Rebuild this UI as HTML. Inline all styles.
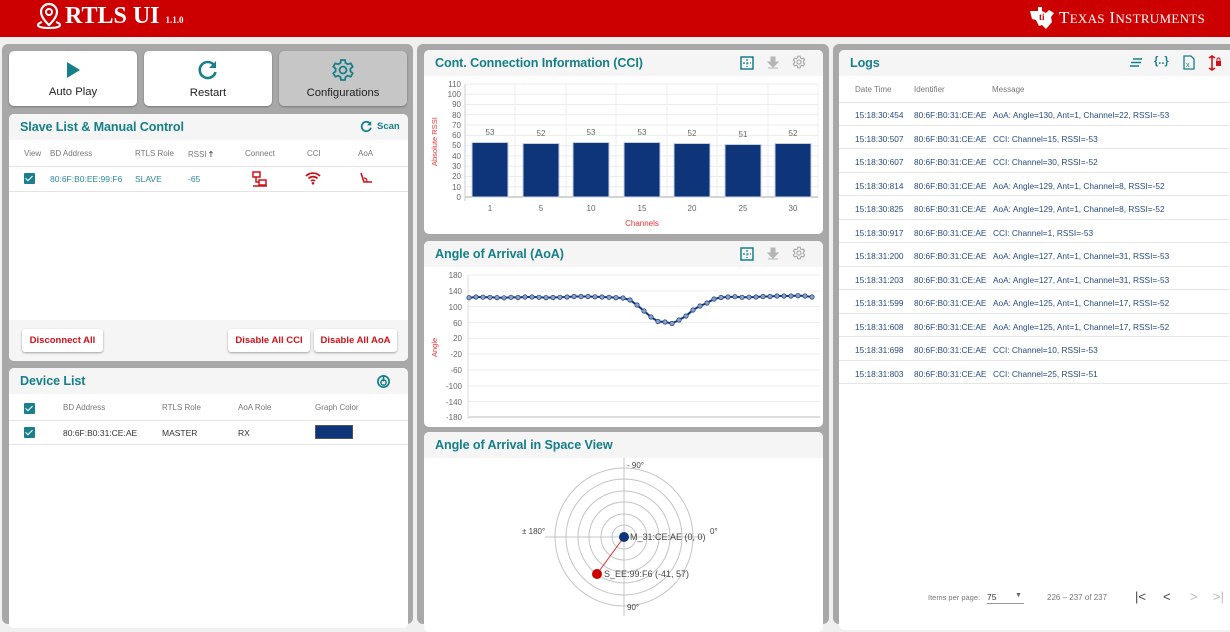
<!DOCTYPE html>
<html><head><meta charset="utf-8"><style>
*{box-sizing:border-box;margin:0;padding:0}
body{width:1230px;height:616px;overflow:hidden;background:#f0f0f0;font-family:"Liberation Sans",sans-serif;position:relative;font-size:9px;color:#333}
.abs{position:absolute}
.hdr{left:0;top:0;width:1230px;height:37px;background:#cc0000}
.col{background:#a8a8a8;border-radius:6px}
.card{background:#fff;border-radius:5px;overflow:hidden}
.ch{background:#f5f5f5;height:26px;position:relative}
.ct{position:absolute;left:11px;top:6px;font-size:12.6px;color:#167f8a;font-weight:bold;letter-spacing:-0.1px}
.btn{background:#fff;border-radius:5px;box-shadow:0 1px 2px rgba(0,0,0,.3);text-align:center;font-size:11.3px;color:#222}
.rb{background:#fff;border-radius:3px;box-shadow:0 1px 2px rgba(0,0,0,.35);color:#d0101a;font-weight:bold;font-size:9.5px;text-align:center;line-height:23px;height:23px}
.th{color:#777;font-size:8px}
.cb{width:11px;height:11px;background:#1a7f8c;border-radius:1px}
.cb:after{content:"";position:absolute;left:3px;top:1px;width:3px;height:6px;border:solid #fff;border-width:0 1.5px 1.5px 0;transform:rotate(45deg)}
.ln{height:1px;background:#e4e4e4}
</style></head><body>
<div class="abs hdr"></div>
<svg class="abs" style="left:36px;top:2px" width="26" height="28" viewBox="0 0 26 28"><path d="M13 2a8 8 0 0 0-8 8c0 6 8 13 8 13s8-7 8-13a8 8 0 0 0-8-8z" fill="none" stroke="#fff" stroke-width="2.2"/><circle cx="13" cy="10" r="3" fill="none" stroke="#fff" stroke-width="2"/><path d="M6 20c-3 1-4 2-4 3 0 2 5 3 11 3s11-1 11-3c0-1-1-2-4-3" fill="none" stroke="#fff" stroke-width="2"/></svg>
<div class="abs" style="left:65px;top:3px;color:#fff;font-family:'Liberation Serif',serif;font-weight:bold;font-size:24px">RTLS UI <span style="font-size:9px">1.1.0</span></div>
<svg class="abs" style="left:1028px;top:5px" width="28" height="24" viewBox="0 0 28 24"><path d="M2 6h8V2h4v4l4 2 3-3 5 3-3 4 1 5-6 7-4-4-3 1-3-6-4-1z" fill="#fff"/><text x="11" y="15" font-size="9" fill="#cc0000" font-weight="bold" font-family="Liberation Serif">ti</text></svg>
<div class="abs" style="left:1059px;top:8px;color:#fff;font-family:'Liberation Serif',serif;font-size:17px;letter-spacing:0.3px">T<span style="font-size:13px">EXAS</span> I<span style="font-size:13px">NSTRUMENTS</span></div>

<!-- LEFT COLUMN -->
<div class="abs col" style="left:2px;top:44px;width:411px;height:580px"></div>
<div class="abs btn" style="left:9px;top:51px;width:128px;height:55px"><svg style="margin-top:10px" width="16" height="18"><path d="M2 1l13 8-13 8z" fill="#167f8a"/></svg><div style="margin-top:4px">Auto Play</div></div>
<div class="abs btn" style="left:144px;top:51px;width:128px;height:55px"><svg style="margin-top:8px" width="22" height="22" viewBox="0 0 22 22"><path d="M17 6a8 8 0 1 0 1.5 7" fill="none" stroke="#167f8a" stroke-width="2.6"/><path d="M19 2v7h-7z" fill="#167f8a"/></svg><div style="margin-top:3px">Restart</div></div>
<div class="abs btn" style="left:279px;top:51px;width:128px;height:55px;background:#c6c6c6"><svg style="margin-top:7px" width="24" height="24" viewBox="0 0 24 24"><path d="M10 2h4l.6 3 2.2 1.3 2.9-1 2 3.4-2.3 2v2.6l2.3 2-2 3.4-2.9-1-2.2 1.3-.6 3h-4l-.6-3-2.2-1.3-2.9 1-2-3.4 2.3-2v-2.6l-2.3-2 2-3.4 2.9 1L9.4 5z" fill="none" stroke="#167f8a" stroke-width="1.8"/><circle cx="12" cy="12" r="3.5" fill="none" stroke="#167f8a" stroke-width="1.8"/></svg><div style="margin-top:2px">Configurations</div></div>

<div class="abs card" style="left:9px;top:114px;width:399px;height:247px">
 <div class="ch"><div class="ct">Slave List &amp; Manual Control</div>
 <svg class="abs" style="left:351px;top:6px" width="13" height="13" viewBox="0 0 22 22"><path d="M17 6a8 8 0 1 0 1.5 7" fill="none" stroke="#167f8a" stroke-width="3"/><path d="M19 2v7h-7z" fill="#167f8a"/></svg>
 <div class="abs" style="left:368px;top:7px;color:#167f8a;font-size:9.5px;font-weight:bold">Scan</div></div>
 <div class="abs th" style="left:15px;top:35px">View</div><div class="abs th" style="left:41px;top:35px">BD Address</div><div class="abs th" style="left:126px;top:35px">RTLS Role</div><div class="abs th" style="left:179px;top:35px">RSSI <b style="color:#444">🡑</b></div><div class="abs th" style="left:236px;top:35px">Connect</div><div class="abs th" style="left:298px;top:35px">CCI</div><div class="abs th" style="left:349px;top:35px">AoA</div>
 <div class="abs ln" style="left:0;top:52px;width:399px"></div>
 <div class="abs cb" style="left:15px;top:59px"></div>
 <div class="abs" style="left:41px;top:60px;color:#2a8a98;font-size:8.5px">80:6F:B0:EE:99:F6</div>
 <div class="abs" style="left:126px;top:60px;color:#2a8a98;font-size:8.5px">SLAVE</div>
 <div class="abs" style="left:179px;top:60px;color:#2a8a98;font-size:8.5px">-65</div>
 <svg class="abs" style="left:243px;top:57px" width="16" height="16"><rect x="1" y="1" width="7" height="5" fill="none" stroke="#d0101a" stroke-width="1.5"/><rect x="7" y="9" width="7" height="5" fill="none" stroke="#d0101a" stroke-width="1.5"/><path d="M4 6v5h3M1 15h6M7 15h8" stroke="#d0101a" stroke-width="1.5" fill="none"/></svg>
 <svg class="abs" style="left:296px;top:57px" width="16" height="14" viewBox="0 0 16 14"><path d="M1 5a10 10 0 0 1 14 0M3.5 7.5a6.5 6.5 0 0 1 9 0M6 10a3 3 0 0 1 4 0" fill="none" stroke="#d0101a" stroke-width="1.8"/><circle cx="8" cy="12.3" r="1.3" fill="#d0101a"/></svg>
 <svg class="abs" style="left:350px;top:58px" width="14" height="12"><path d="M2 1l3 9h8" fill="none" stroke="#d0101a" stroke-width="1.6"/><path d="M5 6q3 0 3 4" fill="none" stroke="#d0101a" stroke-width="1.2"/></svg>
 <div class="abs ln" style="left:0;top:77px;width:399px"></div>
 <div class="abs" style="left:0;top:206px;width:399px;height:41px;background:#f5f5f5"></div>
 <div class="abs rb" style="left:13px;top:215px;width:81px">Disconnect All</div>
 <div class="abs rb" style="left:219px;top:215px;width:82px">Disable All CCI</div>
 <div class="abs rb" style="left:305px;top:215px;width:83px">Disable All AoA</div>
</div>

<div class="abs card" style="left:9px;top:368px;width:399px;height:260px">
 <div class="ch"><div class="ct">Device List</div>
 <svg class="abs" style="left:367px;top:6px" width="15" height="15" viewBox="0 0 16 16"><circle cx="8" cy="8" r="6" fill="none" stroke="#167f8a" stroke-width="1.8"/><circle cx="8" cy="9" r="2.8" fill="none" stroke="#167f8a" stroke-width="1.6"/><path d="M8 2v6" stroke="#167f8a" stroke-width="1.8"/></svg></div>
 <div class="abs cb" style="left:15px;top:35px"></div>
 <div class="abs th" style="left:54px;top:35px">BD Address</div><div class="abs th" style="left:153px;top:35px">RTLS Role</div><div class="abs th" style="left:229px;top:35px">AoA Role</div><div class="abs th" style="left:306px;top:35px">Graph Color</div>
 <div class="abs ln" style="left:0;top:52px;width:399px"></div>
 <div class="abs cb" style="left:15px;top:59px"></div>
 <div class="abs" style="left:54px;top:60px;font-size:8.5px;color:#333">80:6F:B0:31:CE:AE</div>
 <div class="abs" style="left:153px;top:60px;font-size:8.5px;color:#333">MASTER</div>
 <div class="abs" style="left:229px;top:60px;font-size:8.5px;color:#333">RX</div>
 <div class="abs" style="left:306px;top:57px;width:38px;height:14px;background:#0e347a;border:1px solid #555"></div>
 <div class="abs ln" style="left:0;top:76px;width:399px"></div>
</div>

<!-- MIDDLE COLUMN -->
<div class="abs col" style="left:417px;top:44px;width:412px;height:580px"></div>
<div class="abs card" style="left:424px;top:50px;width:399px;height:184px">
 <div class="ch"><div class="ct">Cont. Connection Information (CCI)</div>
 <svg class="abs" style="left:316px;top:6px" width="14" height="14"><rect x="1" y="1" width="12" height="12" fill="none" stroke="#167f8a" stroke-width="1.5"/><path d="M7 3v8M3 7h8" stroke="#167f8a" stroke-width="1.2" stroke-dasharray="2 1.5"/></svg>
 <svg class="abs" style="left:343px;top:6px" width="12" height="13"><path d="M4 1h4v5h3l-5 5-5-5h3z M1 12h10" fill="#b5b5b5" stroke="#b5b5b5" stroke-width="1"/></svg>
 <svg class="abs" style="left:368px;top:5px" width="14" height="14" viewBox="0 0 24 24"><path d="M10 2h4l.6 3 2.2 1.3 2.9-1 2 3.4-2.3 2v2.6l2.3 2-2 3.4-2.9-1-2.2 1.3-.6 3h-4l-.6-3-2.2-1.3-2.9 1-2-3.4 2.3-2v-2.6l-2.3-2 2-3.4 2.9 1L9.4 5z" fill="none" stroke="#aaa" stroke-width="2"/><circle cx="12" cy="12" r="3.5" fill="none" stroke="#aaa" stroke-width="2"/></svg></div>
</div>
<svg class="abs" style="left:424px;top:76px" width="399" height="158" font-family="Liberation Sans" font-size="8" fill="#666">
 <g stroke="#ececec" stroke-width="1">
  <line x1="41" x2="394" y1="8" y2="8"/><line x1="41" x2="394" y1="18.3" y2="18.3"/><line x1="41" x2="394" y1="28.5" y2="28.5"/><line x1="41" x2="394" y1="38.8" y2="38.8"/><line x1="41" x2="394" y1="49" y2="49"/><line x1="41" x2="394" y1="59.4" y2="59.4"/><line x1="41" x2="394" y1="69.6" y2="69.6"/><line x1="41" x2="394" y1="79.9" y2="79.9"/><line x1="41" x2="394" y1="90.2" y2="90.2"/><line x1="41" x2="394" y1="100.5" y2="100.5"/><line x1="41" x2="394" y1="110.7" y2="110.7"/>
  <line x1="91" x2="91" y1="8" y2="121"/><line x1="142" x2="142" y1="8" y2="121"/><line x1="192" x2="192" y1="8" y2="121"/><line x1="243" x2="243" y1="8" y2="121"/><line x1="293" x2="293" y1="8" y2="121"/><line x1="344" x2="344" y1="8" y2="121"/><line x1="394" x2="394" y1="8" y2="121"/>
 </g>
 <line x1="41" x2="394" y1="121" y2="121" stroke="#aaa"/><line x1="41" x2="41" y1="8" y2="125" stroke="#ccc"/>
 <g text-anchor="end"><text x="37" y="11">110</text><text x="37" y="21">100</text><text x="37" y="31">90</text><text x="37" y="42">80</text><text x="37" y="52">70</text><text x="37" y="62">60</text><text x="37" y="72">50</text><text x="37" y="83">40</text><text x="37" y="93">30</text><text x="37" y="103">20</text><text x="37" y="114">10</text><text x="37" y="124">0</text></g>
 <g fill="#0e347a" stroke="#c8d0e0" stroke-width="1"><rect x="48" y="66.5" width="36" height="54.5"/><rect x="99" y="67.5" width="36" height="53.5"/><rect x="149" y="66.5" width="36" height="54.5"/><rect x="200" y="66.5" width="36" height="54.5"/><rect x="250" y="67.5" width="36" height="53.5"/><rect x="301" y="68.5" width="36" height="52.5"/><rect x="351" y="67.5" width="36" height="53.5"/></g>
 <g text-anchor="middle"><text x="66" y="59">53</text><text x="117" y="60">52</text><text x="167" y="59">53</text><text x="218" y="59">53</text><text x="268" y="60">52</text><text x="319" y="61">51</text><text x="369" y="60">52</text>
 <text x="66" y="135">1</text><text x="117" y="135">5</text><text x="167" y="135">10</text><text x="218" y="135">15</text><text x="268" y="135">20</text><text x="319" y="135">25</text><text x="369" y="135">30</text>
 <text x="218" y="150" fill="#f03030">Channels</text></g>
 <text transform="translate(13,90) rotate(-90)" fill="#f03030" font-size="7.5">Absolute RSSI</text>
</svg>

<div class="abs card" style="left:424px;top:241px;width:399px;height:186px">
 <div class="ch"><div class="ct">Angle of Arrival (AoA)</div>
 <svg class="abs" style="left:316px;top:6px" width="14" height="14"><rect x="1" y="1" width="12" height="12" fill="none" stroke="#167f8a" stroke-width="1.5"/><path d="M7 3v8M3 7h8" stroke="#167f8a" stroke-width="1.2" stroke-dasharray="2 1.5"/></svg>
 <svg class="abs" style="left:343px;top:6px" width="12" height="13"><path d="M4 1h4v5h3l-5 5-5-5h3z M1 12h10" fill="#b5b5b5" stroke="#b5b5b5" stroke-width="1"/></svg>
 <svg class="abs" style="left:368px;top:5px" width="14" height="14" viewBox="0 0 24 24"><path d="M10 2h4l.6 3 2.2 1.3 2.9-1 2 3.4-2.3 2v2.6l2.3 2-2 3.4-2.9-1-2.2 1.3-.6 3h-4l-.6-3-2.2-1.3-2.9 1-2-3.4 2.3-2v-2.6l-2.3-2 2-3.4 2.9 1L9.4 5z" fill="none" stroke="#aaa" stroke-width="2"/><circle cx="12" cy="12" r="3.5" fill="none" stroke="#aaa" stroke-width="2"/></svg></div>
</div>
<svg class="abs" style="left:0;top:0" width="830" height="430" font-family="Liberation Sans" font-size="8" fill="#666">
 <defs><marker id="m" markerWidth="6" markerHeight="6" refX="3" refY="3" markerUnits="userSpaceOnUse"><circle cx="3" cy="3" r="2.2" fill="#8ea2c8" stroke="#2a4a8a" stroke-width="0.8"/></marker></defs>
 <g stroke="#ececec"><line x1="468" x2="820" y1="275" y2="275"/><line x1="468" x2="820" y1="291" y2="291"/><line x1="468" x2="820" y1="306.5" y2="306.5"/><line x1="468" x2="820" y1="322.5" y2="322.5"/><line x1="468" x2="820" y1="338.5" y2="338.5"/><line x1="468" x2="820" y1="354" y2="354"/><line x1="468" x2="820" y1="370" y2="370"/><line x1="468" x2="820" y1="386" y2="386"/><line x1="468" x2="820" y1="401.5" y2="401.5"/></g>
 <line x1="468" x2="820" y1="417" y2="417" stroke="#bbb"/><line x1="468" x2="468" y1="275" y2="419" stroke="#ddd"/>
 <g text-anchor="end"><text x="462" y="278">180</text><text x="462" y="294">140</text><text x="462" y="310">100</text><text x="462" y="326">60</text><text x="462" y="341">20</text><text x="462" y="357">-20</text><text x="462" y="373">-60</text><text x="462" y="389">-100</text><text x="462" y="405">-140</text><text x="462" y="420">-180</text></g>
 <text transform="translate(437,357) rotate(-90)" fill="#f03030" font-size="7.5">Angle</text>
 <polyline fill="none" stroke="#0e347a" stroke-width="2" marker-start="url(#m)" marker-mid="url(#m)" marker-end="url(#m)" points="469,297.7 476,297 483,297.2 490,297.3 497,297.6 504,297.8 511,297.3 518,297.5 525,297 532,297 539,297.3 546,297.6 553,297.5 560,297.3 567,297 574,296.5 581,296.5 588,296.5 595,296.8 602,297 609,297.3 616,297.6 623,298 630,300 637,305 644,311 651,317 658,321.5 665,322 672,323.5 679,320 686,316 693,310 700,306 707,303 714,299 721,297.5 728,297 735,296.7 742,297.3 749,297.2 756,297 763,296.5 770,296.5 777,296 784,296 791,296 798,295.6 805,296 812,297"/>
</svg>

<div class="abs card" style="left:424px;top:432px;width:399px;height:200px">
 <div class="ch"><div class="ct">Angle of Arrival in Space View</div></div>
</div>
<svg class="abs" style="left:424px;top:458px" width="399" height="158" font-family="Liberation Sans" font-size="8" fill="#444">
 <g fill="none" stroke="#c4c4c4" stroke-width="1"><circle cx="200" cy="79" r="69"/><circle cx="200" cy="79" r="58"/><circle cx="200" cy="79" r="46"/><circle cx="200" cy="79" r="35"/><circle cx="200" cy="79" r="23"/><circle cx="200" cy="79" r="12"/>
 <line x1="121" x2="279" y1="79" y2="79"/><line x1="200" x2="200" y1="0" y2="158"/></g>
 <text x="203" y="10">- 90°</text><text x="98" y="76">± 180°</text><text x="286" y="76">0°</text><text x="203" y="152">90°</text>
 <line x1="200" y1="79" x2="173" y2="116" stroke="#e03030" stroke-width="1"/>
 <circle cx="200" cy="79" r="5" fill="#0e347a"/><circle cx="173" cy="116" r="5" fill="#cc0000"/>
 <text x="206" y="82" font-size="9">M_31:CE:AE (0, 0)</text><text x="180" y="119" font-size="9">S_EE:99:F6 (-41, 57)</text>
</svg>

<!-- RIGHT COLUMN -->
<div class="abs col" style="left:833px;top:44px;width:410px;height:580px"></div>
<div class="abs card" style="left:839px;top:50px;width:400px;height:580px">
 <div class="ch"><div class="ct" style="top:6px">Logs</div>
 <svg class="abs" style="left:291px;top:8px" width="12" height="9"><path d="M3 1h9M1 4.5h10M0 8h9" stroke="#167f8a" stroke-width="1.6"/></svg>
 <div class="abs" style="left:315px;top:5px;color:#167f8a;font-weight:bold;font-size:11px">{..}</div>
 <svg class="abs" style="left:344px;top:5px" width="12" height="15"><path d="M1 1h7l3 3v10H1z" fill="none" stroke="#167f8a" stroke-width="1.3"/><text x="3" y="12" font-size="7" fill="#167f8a" font-family="Liberation Sans">x</text></svg>
 <svg class="abs" style="left:369px;top:5px" width="14" height="16"><path d="M4 1v14M1 3l3-2 3 2M1 13l3 2 3-2" fill="none" stroke="#d0101a" stroke-width="1.6"/><rect x="8" y="6" width="5" height="5" fill="#d0101a"/><path d="M9 6V4.5a1.5 1.5 0 0 1 3 0V6" fill="none" stroke="#d0101a"/></svg></div>
 <div class="abs th" style="left:16px;top:35px">Date Time</div><div class="abs th" style="left:75px;top:35px">Identifier</div><div class="abs th" style="left:153px;top:35px">Message</div>
 <div class="abs ln" style="left:0;top:52px;width:400px"></div>
</div>
<div class="abs" style="left:839px;top:102px;width:390px">
<style>.r{height:23.5px;border-bottom:1px solid #e6e6e6;position:relative}.r span{position:absolute;top:8px;font-size:8.3px;color:#274a82}</style>
<div class="r"><span style="left:16px">15:18:30:454</span><span style="left:75px">80:6F:B0:31:CE:AE</span><span style="left:154px">AoA: Angle=130, Ant=1, Channel=22, RSSI=-53</span></div>
<div class="r"><span style="left:16px">15:18:30:507</span><span style="left:75px">80:6F:B0:31:CE:AE</span><span style="left:154px">CCI: Channel=15, RSSI=-53</span></div>
<div class="r"><span style="left:16px">15:18:30:607</span><span style="left:75px">80:6F:B0:31:CE:AE</span><span style="left:154px">CCI: Channel=30, RSSI=-52</span></div>
<div class="r"><span style="left:16px">15:18:30:814</span><span style="left:75px">80:6F:B0:31:CE:AE</span><span style="left:154px">AoA: Angle=129, Ant=1, Channel=8, RSSI=-52</span></div>
<div class="r"><span style="left:16px">15:18:30:825</span><span style="left:75px">80:6F:B0:31:CE:AE</span><span style="left:154px">AoA: Angle=129, Ant=1, Channel=8, RSSI=-52</span></div>
<div class="r"><span style="left:16px">15:18:30:917</span><span style="left:75px">80:6F:B0:31:CE:AE</span><span style="left:154px">CCI: Channel=1, RSSI=-53</span></div>
<div class="r"><span style="left:16px">15:18:31:200</span><span style="left:75px">80:6F:B0:31:CE:AE</span><span style="left:154px">AoA: Angle=127, Ant=1, Channel=31, RSSI=-53</span></div>
<div class="r"><span style="left:16px">15:18:31:203</span><span style="left:75px">80:6F:B0:31:CE:AE</span><span style="left:154px">AoA: Angle=127, Ant=1, Channel=31, RSSI=-53</span></div>
<div class="r"><span style="left:16px">15:18:31:599</span><span style="left:75px">80:6F:B0:31:CE:AE</span><span style="left:154px">AoA: Angle=125, Ant=1, Channel=17, RSSI=-52</span></div>
<div class="r"><span style="left:16px">15:18:31:608</span><span style="left:75px">80:6F:B0:31:CE:AE</span><span style="left:154px">AoA: Angle=125, Ant=1, Channel=17, RSSI=-52</span></div>
<div class="r"><span style="left:16px">15:18:31:698</span><span style="left:75px">80:6F:B0:31:CE:AE</span><span style="left:154px">CCI: Channel=10, RSSI=-53</span></div>
<div class="r"><span style="left:16px">15:18:31:803</span><span style="left:75px">80:6F:B0:31:CE:AE</span><span style="left:154px">CCI: Channel=25, RSSI=-51</span></div>
</div>
<div class="abs" style="left:928px;top:593px;font-size:7.5px;color:#777">Items per page:</div>
<div class="abs" style="left:987px;top:592px;font-size:8.5px;color:#333;width:37px;border-bottom:1px solid #999;height:12px">75<span style="position:absolute;left:28px;top:0;font-size:7px;color:#666">▼</span></div>
<div class="abs" style="left:1047px;top:593px;font-size:8px;color:#777">226 – 237 of 237</div>
<div class="abs" style="left:1135px;top:589px;font-size:13px;color:#444">|&lt;</div>
<div class="abs" style="left:1163px;top:589px;font-size:13px;color:#444">&lt;</div>
<div class="abs" style="left:1190px;top:589px;font-size:13px;color:#bbb">&gt;</div>
<div class="abs" style="left:1213px;top:589px;font-size:13px;color:#bbb">&gt;|</div>
</body></html>
